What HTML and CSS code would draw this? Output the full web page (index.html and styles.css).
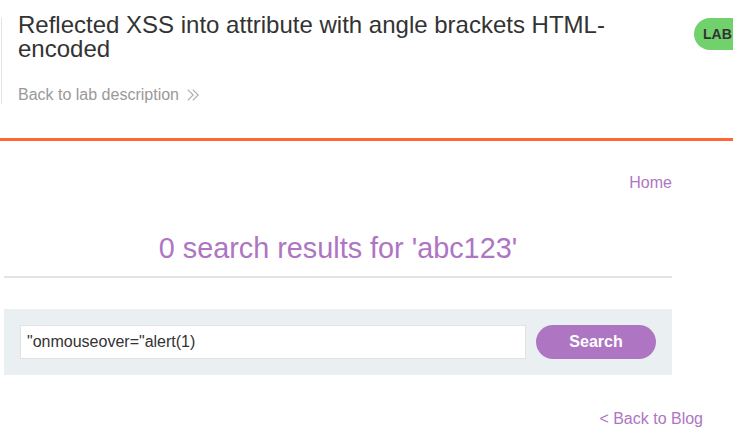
FILE: index.html
```html
<!DOCTYPE html>
<html lang="en">
<head>
<meta charset="utf-8">
<title>Reflected XSS into attribute with angle brackets HTML-encoded</title>
<link rel="stylesheet" href="styles.css">
</head>
<body>
<header class="lab-header">
  <div class="title-container">
    <h2 class="lab-title">Reflected XSS into attribute with angle brackets HTML-encoded</h2>
    <a class="back-link" href="#">Back to lab description
      <svg class="chevrons" width="12" height="12" viewBox="0 0 12 12" aria-hidden="true">
        <path d="M0.8 0.6 L6.2 6 L0.8 11.4" fill="none" stroke="#aaa" stroke-width="1.1"/>
        <path d="M5.8 0.6 L11.2 6 L5.8 11.4" fill="none" stroke="#aaa" stroke-width="1.1"/>
      </svg>
    </a>
  </div>
  <div class="lab-status">
    <span class="lab-label">LAB</span>
    <span class="lab-state">Not solved</span>
  </div>
</header>
<main class="page">
  <section class="container">
    <nav class="top-nav"><a href="#">Home</a></nav>
    <h1 class="results-title">0 search results for 'abc123'</h1>
    <form class="search-box">
      <input class="search-input" type="text" value="&quot;onmouseover=&quot;alert(1)">
      <button class="search-button" type="button">Search</button>
    </form>
  </section>
  <div class="footer-links"><a href="#">&lt; Back to Blog</a></div>
</main>
</body>
</html>
```
FILE: styles.css
```css
html, body {
  margin: 0;
  padding: 0;
  background: #fff;
  font-family: "Liberation Sans", Arial, sans-serif;
  color: #333;
}

a { text-decoration: none; }

.lab-header {
  display: flex;
  align-items: flex-start;
  height: 138px;
  border-bottom: 3px solid #ff6633;
  overflow: hidden;
  padding-left: 1px;
}

.title-container {
  flex: 0 0 auto;
  width: calc(100% - 53px);
  box-sizing: border-box;
  margin-top: 18px;
  padding-left: 16px;
  border-left: 1px solid #e4e4e4;
}

.lab-title {
  margin: -5px 0 0;
  font-size: 24px;
  line-height: 24px;
  font-weight: normal;
  color: #333;
}

.back-link {
  display: flex;
  align-items: center;
  gap: 8px;
  margin-top: 25px;
  font-size: 16px;
  line-height: 18px;
  color: #999;
}

.chevrons { display: block; }

.lab-status {
  flex-shrink: 0;
  display: flex;
  align-items: center;
  gap: 8px;
  height: 32px;
  margin-top: 18px;
  margin-left: 14px;
  padding: 0 14px 0 9px;
  border-radius: 16px;
  background: #70d16d;
  font-size: 14px;
  font-weight: bold;
  color: #333;
  white-space: nowrap;
}

.container {
  margin: 0 61px 0 4px;
}

.top-nav {
  display: flex;
  justify-content: flex-end;
  padding-top: 33px;
  font-size: 16px;
  line-height: 18px;
}

.top-nav a,
.footer-links a { color: #ae75c3; }

.results-title {
  margin: 40px 0 0;
  padding-bottom: 12px;
  border-bottom: 2px solid #e4e4e4;
  text-align: center;
  font-size: 28.8px;
  line-height: 32px;
  font-weight: normal;
  color: #ae75c3;
}

.search-box {
  display: flex;
  gap: 10px;
  margin: 31px 0 0;
  padding: 16px;
  background: #eaeff2;
}

.search-input {
  flex: 1;
  min-width: 0;
  height: 34px;
  box-sizing: border-box;
  margin: 0;
  padding: 0 6px;
  border: 1px solid #e2e2e2;
  background: #fff;
  font-family: "Liberation Sans", Arial, sans-serif;
  font-size: 16px;
  color: #333;
  outline: none;
}

.search-button {
  width: 120px;
  height: 34px;
  margin: 0;
  padding: 0;
  border: none;
  border-radius: 17px;
  background: #ae75c3;
  color: #fff;
  font-family: "Liberation Sans", Arial, sans-serif;
  font-size: 16px;
  font-weight: bold;
}

.footer-links {
  display: flex;
  justify-content: flex-end;
  padding: 35px 30px 0 0;
  font-size: 16px;
  line-height: 18px;
}
```
